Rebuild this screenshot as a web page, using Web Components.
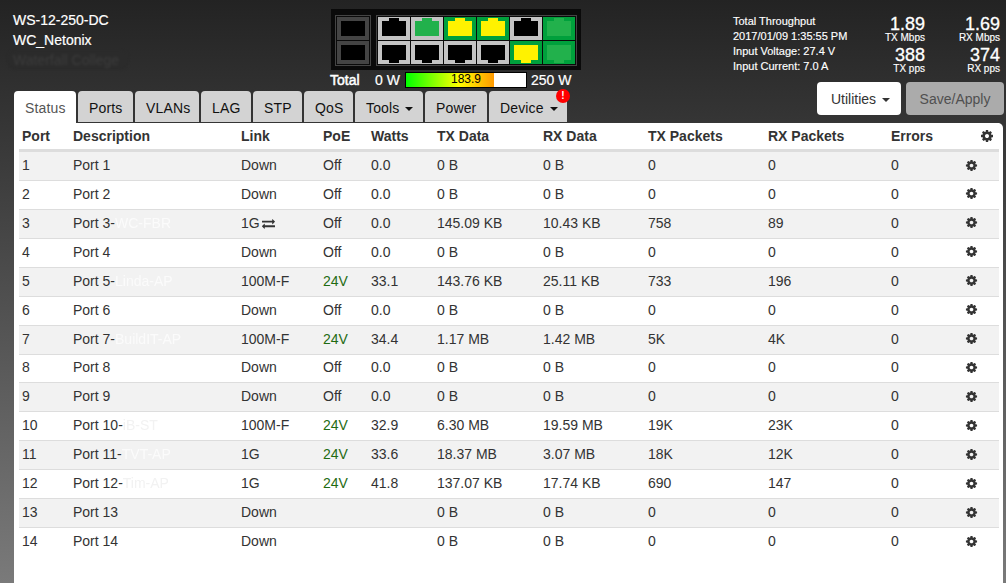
<!DOCTYPE html>
<html lang="en">
<head>
<meta charset="utf-8">
<title>WS-12-250-DC</title>
<style>
html,body{margin:0;padding:0;height:583px;overflow:hidden}
body{background:linear-gradient(#232323,#7a7a7a);font:14px "Liberation Sans",Arial,sans-serif;color:#333}
</style>
</head>
<body>
<nx-app>
  <nx-titles slot="left">
    <div>WS-12-250-DC</div>
    <div>WC_Netonix</div>
    <nx-blur dark>Waterfall College</nx-blur>
  </nx-titles>
  <nx-switch slot="center"></nx-switch>
  <nx-tabs slot="tabs">
    <nx-tab active style="width:62px">Status</nx-tab>
    <nx-tab style="width:55px">Ports</nx-tab>
    <nx-tab style="width:64px">VLANs</nx-tab>
    <nx-tab style="width:50px">LAG</nx-tab>
    <nx-tab style="width:49px">STP</nx-tab>
    <nx-tab style="width:49px">QoS</nx-tab>
    <nx-tab caret style="width:68px">Tools</nx-tab>
    <nx-tab style="width:62px">Power</nx-tab>
    <nx-tab caret alert style="width:78px">Device</nx-tab>
  </nx-tabs>
  <nx-stats slot="stats"></nx-stats>
  <nx-button slot="buttons" caret>Utilities</nx-button>
  <nx-button slot="buttons" disabled>Save/Apply</nx-button>
  <nx-table slot="panel"></nx-table>
</nx-app>
<script>
const COG='M1152 896q0-106-75-181t-181-75-181 75-75 181 75 181 181 75 181-75 75-181zm512-109v222q0 12-8 23t-20 13l-185 28q-19 54-39 91 35 50 107 138 10 12 10 25t-9 23q-27 37-99 108t-94 71q-12 0-26-9l-138-108q-44 23-91 38-16 136-29 186-7 28-36 28h-222q-14 0-24.5-8.5t-11.5-21.5l-28-184q-49-16-90-37l-141 107q-10 9-25 9-14 0-25-11-126-114-165-168-7-10-7-23 0-12 8-23 15-21 51-66.5t54-70.5q-27-50-41-99l-183-27q-13-2-21-12.5t-8-23.5v-222q0-12 8-23t19-13l186-28q14-46 39-92-40-57-107-138-10-12-10-24 0-10 9-23 26-36 98.5-107.5t94.5-71.5q13 0 26 10l138 107q44-23 91-38 16-136 29-186 7-28 36-28h222q14 0 24.5 8.5t11.5 21.5l28 184q49 16 90 37l142-107q9-9 24-9 13 0 25 10 129 119 165 170 7 8 7 22 0 12-8 23-15 21-51 66.5t-54 70.5q26 50 41 98l183 28q13 2 21 12.5t8 23.5z';
const XCHG='M1792 1184v192q0 13-9.5 22.5t-22.5 9.5h-1376v192q0 13-9.5 22.5t-22.5 9.5q-12 0-24-10l-319-320q-9-9-9-22 0-14 9-23l320-320q9-9 23-9 13 0 22.5 9.5t9.5 22.5v192h1376q13 0 22.5 9.5t9.5 22.5zm0-544q0 14-9 23l-320 320q-9 9-23 9-13 0-22.5-9.5t-9.5-22.5v-192h-1376q-13 0-22.5-9.5t-9.5-22.5v-192q0-13 9.5-22.5t22.5-9.5h1376v-192q0-14 9-23t23-9q12 0 24 10l319 319q9 9 9 23z';
const cog=s=>`<svg width="${s}" height="${s}" viewBox="0 0 1792 1792" fill="#333" style="display:block"><path d="${COG}"/></svg>`;

class Base extends HTMLElement{
  constructor(){super();this.attachShadow({mode:'open'}).innerHTML=this.constructor.html;}
}
customElements.define('nx-app',class extends Base{static html=`<style>
:host{display:block;width:1006px;height:583px;overflow:hidden}
.top{display:flex;height:123px}
.l{width:733px;display:flex;flex-direction:column}
.lt{display:flex;height:91px}
.title{width:331px}
.r{flex:1;display:flex;flex-direction:column}
.stats{height:82px}
.btns{display:flex;justify-content:flex-end;gap:5px;padding-right:2px}
.tabs{padding-left:14px}
.panel{margin-left:14px;width:989px;height:460px;background:#fff;border-top-right-radius:5px;padding:0 4px 0 5px;box-sizing:border-box}
</style>
<div class="top"><div class="l"><div class="lt"><div class="title"><slot name="left"></slot></div><slot name="center"></slot></div><div class="tabs"><slot name="tabs"></slot></div></div>
<div class="r"><div class="stats"><slot name="stats"></slot></div><div class="btns"><slot name="buttons"></slot></div></div></div>
<div class="panel"><slot name="panel"></slot></div>`});

customElements.define('nx-titles',class extends Base{static html=`<style>
:host{display:block;padding:10px 0 0 13px;color:#fff;font-size:14px;line-height:20px;-webkit-text-stroke:.2px #fff}
</style><slot></slot>`});

customElements.define('nx-blur',class extends Base{static html=`<style>
:host{display:inline-block;filter:blur(.7px);color:var(--blur,#f3f3f3)}
:host([dark]){color:#3c3c3c;background:#2b2b2b;border-radius:9px;margin-left:-6px;padding:0 10px 0 6px;-webkit-text-stroke:0;filter:blur(1.2px)}
</style><slot></slot>`});

customElements.define('nx-switch',class extends Base{
 static html=`<style>
:host{display:block;width:250px}
.box{background:#0a0a0a;height:61px;margin-top:9px;display:flex;box-sizing:border-box;padding:6px 4px 0 4px;gap:5px}
.grp{height:51px;box-sizing:border-box;border:1px solid #444;padding:1px;display:grid;grid-auto-flow:column;grid-template-rows:23px 23px;gap:1px}
.pw{display:flex;align-items:center;height:20px;color:#fff;font-size:14px;line-height:16px;-webkit-text-stroke:.2px #fff;margin-left:-1px;white-space:nowrap}
.t{-webkit-text-stroke:.5px #fff;width:45px}
.z{width:30px}
.bar{width:122px;height:16px;box-sizing:border-box;border:1px solid #000;background:#fff;position:relative;color:#000;font-size:12px;text-align:center;line-height:13px;-webkit-text-stroke:0;margin-right:4px}
.fill{width:73.5%;height:100%;background:linear-gradient(90deg,#00ff00,#ffff00 60%,#ff9900)}
.v{position:absolute;inset:0}
svg{display:block}
</style>
<div class="box"><div class="grp a"></div><div class="grp b"></div></div>
<div class="pw"><span class="t">Total</span><span class="z">0 W</span><div class="bar"><div class="fill"></div><div class="v">183.9</div></div><span>250 W</span></div>`;
 connectedCallback(){
  const G='#c4c4c4',D='#00a03c',L='#22b14c',Y='#fff200',K='#000',S='#444';
  const port=(bg,fg,flip)=>`<svg width="32" height="23" viewBox="0 0 32 23"><rect width="32" height="23" fill="${bg}"/><path fill="${fg}" d="${flip?'M4 4H28V19H21V22H11V19H4Z':'M4 4H11V1H21V4H28V19H4Z'}"/></svg>`;
  const sfp=()=>`<svg width="32" height="23" viewBox="0 0 32 23"><rect width="32" height="23" fill="${S}"/><rect x="4" y="4" width="24" height="15" fill="#000"/></svg>`;
  this.shadowRoot.querySelector('.a').innerHTML=sfp()+sfp();
  const top=[[G,K],[G,L],[D,Y],[D,Y],[G,K],[D,L]],bot=[[G,K],[G,K],[G,K],[G,K],[D,Y],[D,L]];
  this.shadowRoot.querySelector('.b').innerHTML=top.map((c,i)=>port(c[0],c[1],false)+port(bot[i][0],bot[i][1],true)).join('');
 }
});

customElements.define('nx-tabs',class extends Base{static html=`<style>
:host{display:flex;gap:2px;height:32px}
</style><slot></slot>`});

customElements.define('nx-tab',class extends Base{static html=`<style>
:host{display:block;position:relative;box-sizing:border-box;height:31px;padding:0 0 0 11px;background:#d3d3d3;color:#111;border-radius:4px 4px 0 0;font-size:14px;line-height:34px;white-space:nowrap;letter-spacing:.15px}
:host([active]){background:#fff;color:#555;height:32px}
.c{display:none;width:0;height:0;border:4px solid transparent;border-top-color:#111;border-bottom:0;margin-left:6px;vertical-align:middle}
:host([caret]) .c{display:inline-block}
.b{display:none;position:absolute;right:-3px;top:-2px;width:14px;height:14px;border-radius:50%;background:#f00;color:#fff;font:bold 10px/14px "Liberation Sans",Arial,sans-serif;text-align:center;letter-spacing:0}
:host([alert]) .b{display:block}
</style><slot></slot><span class="c"></span><span class="b">!</span>`});

customElements.define('nx-stats',class extends Base{static html=`<style>
:host{display:flex;color:#fff;padding:14px 0 0 0;box-sizing:border-box;height:82px;-webkit-text-stroke:.15px #fff}
.i{font-size:11px;line-height:15px;width:125px;white-space:nowrap}
.n{width:67px;text-align:right;display:flex;flex-direction:column}
.n+.n{width:75px}
.g{height:31px;padding-top:2px;box-sizing:border-box}
b{display:block;font-weight:normal;font-size:18px;line-height:17px;-webkit-text-stroke:.3px #fff}
small{display:block;font-size:10px;line-height:10px}
</style>
<div class="i"><div>Total Throughput</div><div>2017/01/09 1:35:55 PM</div><div>Input Voltage: 27.4 V</div><div>Input Current: 7.0 A</div></div>
<div class="n"><div class="g"><b>1.89</b><small>TX Mbps</small></div><div class="g"><b>388</b><small>TX pps</small></div></div>
<div class="n"><div class="g"><b>1.69</b><small>RX Mbps</small></div><div class="g"><b>374</b><small>RX pps</small></div></div>`});

customElements.define('nx-button',class extends Base{static html=`<style>
:host{display:block;box-sizing:border-box;height:33px;padding:0 0 0 14px;background:#fff;color:#333;border-radius:4px;font-size:14px;line-height:34px;white-space:nowrap}
:host([disabled]){background:#ababab;color:#505050;width:98px;text-align:center;padding:0}
:host([caret]){width:84px}
.c{display:none;width:0;height:0;border:4px solid transparent;border-top-color:#333;border-bottom:0;margin-left:6px;vertical-align:middle}
:host([caret]) .c{display:inline-block}
</style><slot></slot><span class="c"></span>`});

customElements.define('nx-row',class extends Base{static html=`<style>
:host{display:grid;grid-template-columns:51px 168px 82px 48px 66px 106px 105px 120px 123px 72px 39px;height:28.93px;box-sizing:border-box;border-top:1px solid #ddd;padding-bottom:2px;align-items:center;line-height:20px;color:#333;white-space:nowrap;--blur:#f2f2f2}
:host(:nth-of-type(even)){background:#f2f2f2;--blur:#fbfbfb}
:host([head]){height:26px;border-top:0;padding-bottom:0;background:#fff;font-weight:bold}
:host([first]){border-top:3px solid #ddd;height:31px}
</style><slot></slot>`});

customElements.define('nx-cell',class extends Base{static html=`<style>
:host{display:block;padding-left:3px;overflow:visible}
:host([ok]){color:#1f6b12}
:host([icon]){display:flex;align-items:center;padding-left:5px}
:host([right]){justify-content:flex-end;padding:0 5px 0 0}
</style><slot></slot>`});

customElements.define('nx-table',class extends Base{
 static html=`<style>:host{display:block;width:980px}</style><slot></slot>`;
 connectedCallback(){
  const off=(n,s)=>[n,s,'Down','Off','0.0','0 B','0 B','0','0','0'];
  const rows=[off(1,''),off(2,''),
  [3,'WC-FBR','1G','Off','0.0','145.09 KB','10.43 KB','758','89','0'],off(4,''),
  [5,'Linda-AP','100M-F','24V','33.1','143.76 KB','25.11 KB','733','196','0'],off(6,''),
  [7,'BuildIT-AP','100M-F','24V','34.4','1.17 MB','1.42 MB','5K','4K','0'],off(8,''),off(9,''),
  [10,'iB-ST','100M-F','24V','32.9','6.30 MB','19.59 MB','19K','23K','0'],
  [11,'TVT-AP','1G','24V','33.6','18.37 MB','3.07 MB','18K','12K','0'],
  [12,'Tim-AP','1G','24V','41.8','137.07 KB','17.74 KB','690','147','0'],
  [13,'','Down','','','0 B','0 B','0','0','0'],[14,'','Down','','','0 B','0 B','0','0','0']];
  const head=['Port','Description','Link','PoE','Watts','TX Data','RX Data','TX Packets','RX Packets','Errors'];
  let h='<nx-row head>'+head.map(t=>`<nx-cell>${t}</nx-cell>`).join('')+`<nx-cell icon right>${cog(14)}</nx-cell></nx-row>`;
  rows.forEach((r,i)=>{
   const d=`Port ${r[0]}`+(r[1]?`-<nx-blur>${r[1]}</nx-blur>`:'');
   const link=r[1]==='WC-FBR'?`${r[2]}<svg width="13" height="13" viewBox="0 0 1792 1792" fill="#333" style="vertical-align:-2px;margin-left:2px"><path d="${XCHG}"/></svg>`:r[2];
   h+=`<nx-row ${i==0?'first':''}><nx-cell>${r[0]}</nx-cell><nx-cell>${d}</nx-cell><nx-cell>${link}</nx-cell><nx-cell ${r[3]=='24V'?'ok':''}>${r[3]}</nx-cell>`+r.slice(4).map(t=>`<nx-cell>${t}</nx-cell>`).join('')+`<nx-cell icon>${cog(13)}</nx-cell></nx-row>`;
  });
  this.innerHTML=h;
 }
});
</script>
</body>
</html>
